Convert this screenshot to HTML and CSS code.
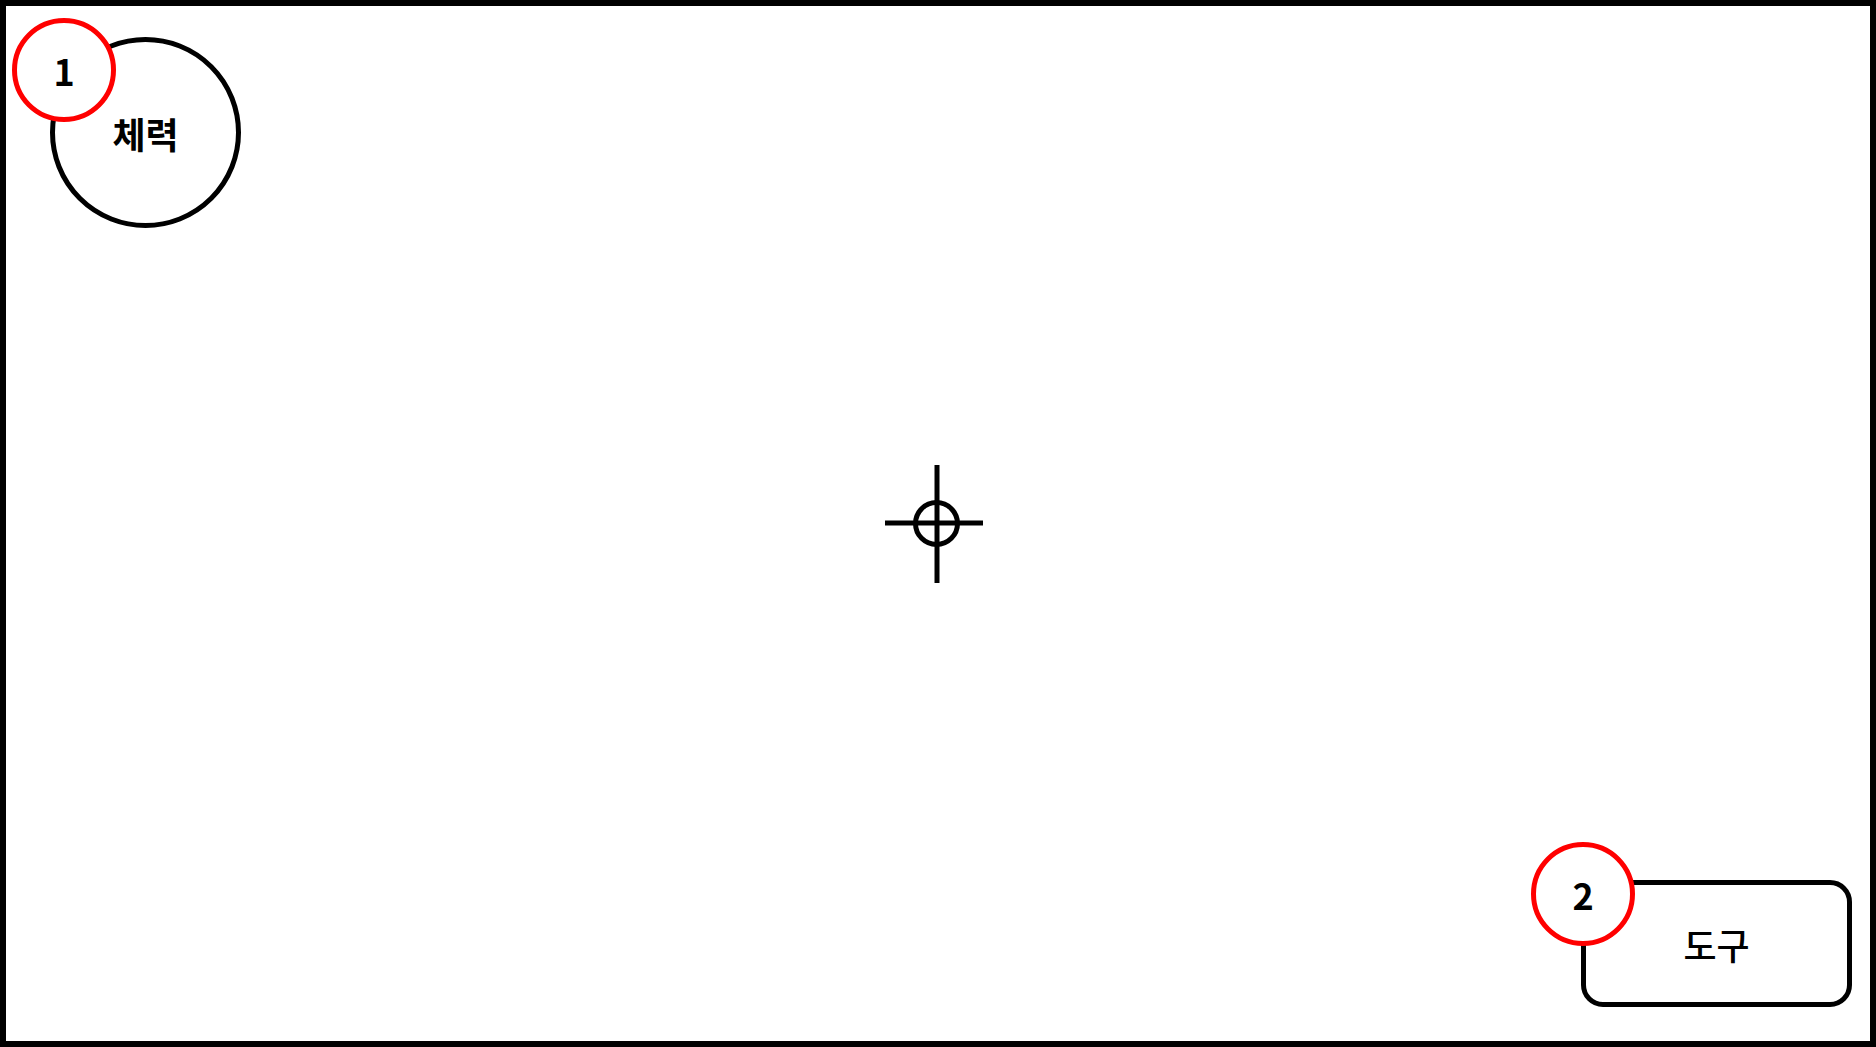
FILE: index.html
```html
<!DOCTYPE html>
<html lang="ko">
<head>
<meta charset="utf-8">
<link rel="stylesheet" href="styles.css">
</head>
<body>
<div class="frame">
  <div class="top">
    <div class="stat">
      <span class="stat-label">체력</span>
      <span class="badge badge-stat">1</span>
    </div>
  </div>
  <div class="middle">
    <svg class="crosshair" width="98" height="118" viewBox="0 0 98 118">
      <line x1="52" y1="0" x2="52" y2="118" stroke="#000" stroke-width="5"/>
      <line x1="0" y1="58" x2="98" y2="58" stroke="#000" stroke-width="5"/>
      <circle cx="51.5" cy="58.5" r="21" fill="none" stroke="#000" stroke-width="5"/>
    </svg>
  </div>
  <div class="bottom">
    <div class="tool">
      <span class="tool-label">도구</span>
      <span class="badge badge-tool">2</span>
    </div>
  </div>
</div>
</body>
</html>
```

FILE: styles.css
```css
html, body {
  margin: 0;
  padding: 0;
  background: #fff;
}
body {
  font-family: "Noto Sans CJK KR", "Noto Sans", sans-serif;
  color: #000;
}
.frame {
  box-sizing: border-box;
  width: 1876px;
  height: 1047px;
  border: 6px solid #000;
  display: grid;
  grid-template-rows: 1fr auto 1fr;
}
.top {
  display: flex;
  align-items: flex-start;
  justify-content: flex-start;
}
.middle {
  display: flex;
  justify-content: center;
}
.crosshair {
  margin-right: 8px;
}
.bottom {
  display: flex;
  align-items: flex-end;
  justify-content: flex-end;
}
.stat {
  position: relative;
  box-sizing: border-box;
  width: 191px;
  height: 191px;
  margin: 31px 0 0 44px;
  border: 5px solid #000;
  border-radius: 50%;
  display: flex;
  align-items: center;
  justify-content: center;
}
.stat-label {
  font-size: 36px;
  font-weight: 700;
  line-height: 1;
}
.tool {
  position: relative;
  box-sizing: border-box;
  width: 271px;
  height: 127px;
  margin: 0 18px 34px 0;
  border: 5px solid #000;
  border-radius: 22px;
  display: flex;
  align-items: center;
  justify-content: center;
}
.tool-label {
  font-size: 36px;
  font-weight: 500;
  line-height: 1;
}
.badge {
  position: absolute;
  box-sizing: border-box;
  width: 104px;
  height: 104px;
  border: 5px solid #f00;
  border-radius: 50%;
  display: flex;
  align-items: center;
  justify-content: center;
  font-size: 36px;
  font-weight: 700;
  line-height: 1;
  background: #fff;
}
.badge-stat {
  left: -43px;
  top: -24px;
}
.badge-tool {
  left: -55px;
  top: -43px;
}
```
